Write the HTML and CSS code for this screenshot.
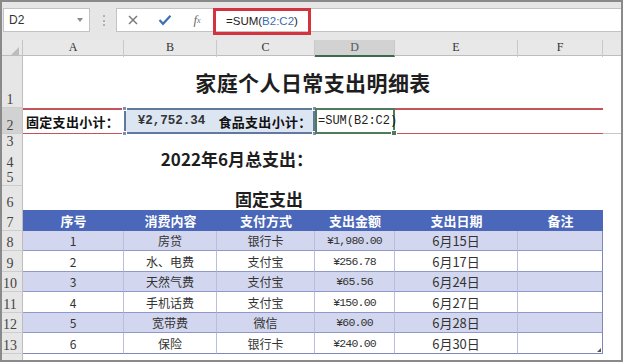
FILE: index.html
```html
<!DOCTYPE html>
<html lang="zh-CN">
<head>
  <meta charset="UTF-8" />
  <title>家庭个人日常支出明细表</title>
  <link rel="stylesheet" href="styles.css">
</head>
<body>
  <div class="window">
    <!-- formula bar -->
    <div class="formula-bar">
      <div class="name-box">
        <span>D2</span>
        <span class="caret"></span>
      </div>
      <div class="grip"></div>
      <div class="formula-box">
        <span class="fb-btn">
          <svg width="12" height="12" viewBox="0 0 12 12"><path d="M2 2 L10 10 M10 2 L2 10" stroke="#7b7b7b" stroke-width="1.5"/></svg>
        </span>
        <span class="fb-btn">
          <svg width="14" height="12" viewBox="0 0 14 12"><path d="M1.5 6 L5 9.8 L12.5 1.8" fill="none" stroke="#3b70b6" stroke-width="2.2"/></svg>
        </span>
        <span class="fb-btn fx">f<sub>x</sub></span>
        <span class="formula-text">=SUM(<span class="ref">B2:C2</span>)</span>
      </div>
    </div>

    <!-- sheet -->
    <div class="sheet">
      <div class="row col-head">
        <div class="corner"></div>
        <div class="ch">A</div>
        <div class="ch">B</div>
        <div class="ch">C</div>
        <div class="ch on">D</div>
        <div class="ch">E</div>
        <div class="ch">F</div>
        <div class="ch end"></div>
      </div>

      <div class="row h52">
        <div class="rh">1</div>
        <div class="cell title">家庭个人日常支出明细表</div>
      </div>

      <div class="row h26">
        <div class="rh on">2</div>
        <div class="cell red label-a">固定支出小计：</div>
        <div class="sel">
          <div class="cell money">¥2,752.34</div>
          <div class="cell label-c">食品支出小计：</div>
          <i class="knob tl"></i><i class="knob tr"></i><i class="knob bl"></i><i class="knob br"></i>
        </div>
        <div class="cell cur">=SUM(B2:C2)<i class="fill-handle"></i></div>
        <div class="cell red"></div>
        <div class="cell red"></div>
        <div class="cell grid-end"></div>
      </div>

      <div class="row h12"><div class="rh">3</div></div>

      <div class="row h24">
        <div class="rh">4</div>
        <div class="cell heading total">2022年6月总支出：</div>
      </div>

      <div class="row h16"><div class="rh">5</div></div>

      <div class="row h24">
        <div class="rh">6</div>
        <div class="cell heading">固定支出</div>
      </div>

      <div class="row h21 thead">
        <div class="rh">7</div>
        <div class="th">序号</div>
        <div class="th">消费内容</div>
        <div class="th">支付方式</div>
        <div class="th">支出金额</div>
        <div class="th">支出日期</div>
        <div class="th">备注</div>
      </div>

      <div class="row h20 band">
        <div class="rh">8</div>
        <div class="td">1</div><div class="td">房贷</div><div class="td">银行卡</div>
        <div class="td num">¥1,980.00</div><div class="td date">6月15日</div><div class="td last"></div>
      </div>
      <div class="row h21">
        <div class="rh">9</div>
        <div class="td">2</div><div class="td">水、电费</div><div class="td">支付宝</div>
        <div class="td num">¥256.78</div><div class="td date">6月17日</div><div class="td last"></div>
      </div>
      <div class="row h20 band">
        <div class="rh">10</div>
        <div class="td">3</div><div class="td">天然气费</div><div class="td">支付宝</div>
        <div class="td num">¥65.56</div><div class="td date">6月24日</div><div class="td last"></div>
      </div>
      <div class="row h21">
        <div class="rh">11</div>
        <div class="td">4</div><div class="td">手机话费</div><div class="td">支付宝</div>
        <div class="td num">¥150.00</div><div class="td date">6月27日</div><div class="td last"></div>
      </div>
      <div class="row h20 band">
        <div class="rh">12</div>
        <div class="td">5</div><div class="td">宽带费</div><div class="td">微信</div>
        <div class="td num">¥60.00</div><div class="td date">6月28日</div><div class="td last"></div>
      </div>
      <div class="row h21 tlast">
        <div class="rh">13</div>
        <div class="td">6</div><div class="td">保险</div><div class="td">银行卡</div>
        <div class="td num">¥240.00</div><div class="td date">6月30日</div><div class="td last"><i class="resize"></i></div>
      </div>

      <div class="row h20"><div class="rh"></div></div>
    </div>
  </div>
</body>
</html>
```

FILE: styles.css
```css
* {
  box-sizing: border-box;
}

body {
  margin: 0;
  width: 623px;
  height: 362px;
  overflow: hidden;
  background: #fff;
  font-family: "Noto Sans CJK SC", sans-serif;
  color: #222;
}

.window {
  height: 362px;
  border: 2px solid #8a8a8a;
  background: #e6e6e6;
  display: flex;
  flex-direction: column;
  overflow: hidden;
}

/* === FORMULA BAR === */
.formula-bar {
  height: 38px;
  flex: none;
  display: flex;
  align-items: flex-start;
  padding: 6px 0 0 1px;
}

.name-box {
  width: 87px;
  height: 24px;
  background: #fff;
  border: 1px solid #c3c3c3;
  display: flex;
  align-items: center;
  justify-content: space-between;
  padding: 0 6px 0 5px;
  font: 12px "Liberation Sans", sans-serif;
  color: #333;
}

.caret {
  width: 0;
  height: 0;
  border-left: 3px solid transparent;
  border-right: 3px solid transparent;
  border-top: 4px solid #8a8a8a;
}

.grip {
  width: 2px;
  height: 11px;
  margin: 7px 11px 0 13px;
  border-left: 2px dotted #b0b0b0;
}

.formula-box {
  flex: 1;
  height: 24px;
  background: #fff;
  border: 1px solid #c3c3c3;
  border-right: none;
  display: flex;
  align-items: flex-start;
}

.fb-btn {
  width: 32px;
  height: 22px;
  display: flex;
  align-items: center;
  justify-content: center;
}

.fx {
  font: italic 13px "Liberation Serif", serif;
  color: #6d6d6d;
}

.fx sub {
  font-size: 8px;
}

.formula-text {
  height: 27px;
  margin-top: -1px;
  padding: 0 10px;
  border: 3px solid #d2333f;
  font: 11.5px "Liberation Sans", sans-serif;
  line-height: 21px;
  color: #222;
}

.formula-text .ref {
  color: #3d6bb0;
}

/* === SHEET === */
.sheet {
  flex: 1;
  background: #fff;
  overflow: hidden;
}

.row {
  display: grid;
  grid-template-columns: 21px 101px 93px 98px 80px 123px 85px 1fr;
}

.h52 { height: 52px; }
.h26 { height: 26px; }
.h24 { height: 24px; }
.h21 { height: 21px; }
.h20 { height: 20px; }
.h16 { height: 16px; }
.h12 { height: 12px; }

.col-head {
  height: 16px;
  background: #e8e8e8;
  border-bottom: 1px solid #bdbdbd;
}

.corner {
  position: relative;
  border-right: 1px solid #c4c4c4;
}

.corner::after {
  content: "";
  position: absolute;
  right: 3px;
  bottom: 2px;
  border-left: 8px solid transparent;
  border-bottom: 8px solid #bdbdbd;
}

.ch {
  border-right: 1px solid #c9c9c9;
  text-align: center;
  font: 12px/15px "Liberation Serif", serif;
  color: #333;
}

.ch.on {
  background: #d2d2d2;
  border-bottom: 2px solid #3b6b4c;
  color: #555;
}

.ch.end {
  border-right: none;
}

.rh {
  grid-column: 1;
  background: #e6e6e6;
  border-right: 1px solid #bdbdbd;
  border-bottom: 1px solid #cdcdcd;
  display: flex;
  align-items: flex-end;
  justify-content: center;
  padding-right: 4px;
  font: 14px/15px "Liberation Serif", serif;
  color: #444;
}

.rh.on {
  background: #d2d2d2;
}

.cell {
  display: flex;
  align-items: center;
  white-space: nowrap;
}

.title {
  grid-column: 2 / 8;
  justify-content: center;
  font-size: 21px;
  font-weight: 700;
  color: #1e1e1e;
  letter-spacing: 0.4px;
}

.heading {
  grid-column: 2 / 5;
  justify-content: flex-end;
  padding-right: 12px;
  font-size: 17px;
  font-weight: 700;
  color: #1e1e1e;
}

.heading.total {
  padding-right: 2px;
}

/* row 2 */
.red {
  border-top: 2px solid #c3545a;
  border-bottom: 1px solid #c3545a;
}

.label-a {
  padding-left: 3px;
  font-size: 13px;
  font-weight: 700;
  letter-spacing: 0.3px;
  color: #111;
}

.sel {
  grid-column: 3 / 5;
  position: relative;
  display: grid;
  grid-template-columns: 91px 1fr;
  background: #dce5f2;
  border: 2px solid #62799e;
}

.money {
  justify-content: center;
  font: 12.5px "Liberation Mono", monospace;
  font-weight: 700;
  color: #333;
}

.label-c {
  justify-content: center;
  font-size: 13px;
  font-weight: 700;
  letter-spacing: 0.3px;
  color: #111;
}

.knob {
  position: absolute;
  width: 5px;
  height: 5px;
  background: #7d90b0;
  border: 1px solid #fff;
}

.knob.tl { left: -4px; top: -4px; }
.knob.tr { right: -4px; top: -4px; }
.knob.bl { left: -4px; bottom: -4px; }
.knob.br { right: -4px; bottom: -4px; }

.cur {
  position: relative;
  border: 2px solid #4d7b5c;
  padding-left: 1px;
  font: 12px "Liberation Mono", monospace;
  color: #222;
}

.fill-handle {
  position: absolute;
  right: -4px;
  bottom: -4px;
  width: 6px;
  height: 6px;
  background: #4d7b5c;
  border: 1px solid #fff;
}

.grid-end {
  border-bottom: 1px solid #c8c8c8;
}

/* === TABLE === */
.th {
  background: #4a67b9;
  color: #fff;
  font-size: 13px;
  font-weight: 700;
  display: flex;
  align-items: center;
  justify-content: center;
}

.td {
  display: flex;
  align-items: center;
  justify-content: center;
  border-right: 1px solid #b8bedb;
  border-bottom: 1px solid #8f99c9;
  font-size: 12px;
  color: #333;
  white-space: nowrap;
}

.band .td {
  background: #d2d7ef;
}

.td.last {
  position: relative;
  border-right-color: #7d87b8;
}

.td.num {
  font: 11.5px "Liberation Mono", monospace;
  letter-spacing: -0.8px;
}

.td.date {
  font-size: 13px;
}

.tlast .td {
  border-bottom-color: #7d87b8;
}

.resize {
  position: absolute;
  right: 1px;
  bottom: 1px;
  border-left: 4px solid transparent;
  border-bottom: 4px solid #555;
}
```
